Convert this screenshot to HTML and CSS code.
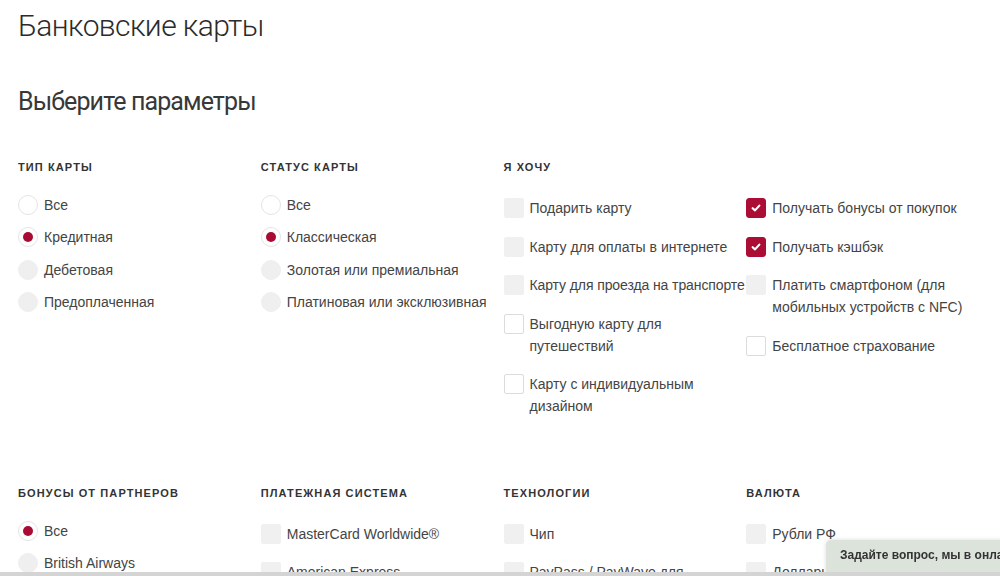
FILE: index.html
```html
<!DOCTYPE html>
<html lang="ru">
<head>
    <meta charset="UTF-8">
    <meta name="viewport" content="width=device-width, initial-scale=1.0">
    <title>Банковские карты</title>
    <link rel="stylesheet" href="styles.css">
</head>
<body>
    <div class="page">
        <h1>Банковские карты</h1>
        <h2>Выберите параметры</h2>

        <div class="section">
            <div class="group">
                <div class="group-title">Тип карты</div>
                <div class="radios">
                    <label class="opt"><span class="radio"></span><span class="text">Все</span></label>
                    <label class="opt"><span class="radio checked"></span><span class="text">Кредитная</span></label>
                    <label class="opt"><span class="radio off"></span><span class="text">Дебетовая</span></label>
                    <label class="opt"><span class="radio off"></span><span class="text">Предоплаченная</span></label>
                </div>
            </div>
            <div class="group">
                <div class="group-title">Статус карты</div>
                <div class="radios">
                    <label class="opt"><span class="radio"></span><span class="text">Все</span></label>
                    <label class="opt"><span class="radio checked"></span><span class="text">Классическая</span></label>
                    <label class="opt"><span class="radio off"></span><span class="text">Золотая или премиальная</span></label>
                    <label class="opt"><span class="radio off"></span><span class="text">Платиновая или эксклюзивная</span></label>
                </div>
            </div>
            <div class="group wide">
                <div class="group-title">Я хочу</div>
                <div class="checks-cols">
                    <div class="checks">
                        <label class="opt"><span class="box off"></span><span class="text">Подарить карту</span></label>
                        <label class="opt"><span class="box off"></span><span class="text">Карту для оплаты в интернете</span></label>
                        <label class="opt"><span class="box off"></span><span class="text nowrap">Карту для проезда на транспорте</span></label>
                        <label class="opt"><span class="box"></span><span class="text">Выгодную карту для путешествий</span></label>
                        <label class="opt"><span class="box"></span><span class="text">Карту с индивидуальным дизайном</span></label>
                    </div>
                    <div class="checks">
                        <label class="opt"><span class="box checked"><svg viewBox="0 0 10 10"><polyline points="2.2,5.2 4.2,7 7.8,3"/></svg></span><span class="text">Получать бонусы от покупок</span></label>
                        <label class="opt"><span class="box checked"><svg viewBox="0 0 10 10"><polyline points="2.2,5.2 4.2,7 7.8,3"/></svg></span><span class="text">Получать кэшбэк</span></label>
                        <label class="opt"><span class="box off"></span><span class="text">Платить смартфоном (для мобильных устройств с NFC)</span></label>
                        <label class="opt"><span class="box"></span><span class="text">Бесплатное страхование</span></label>
                    </div>
                </div>
            </div>
        </div>

        <div class="section">
            <div class="group">
                <div class="group-title">Бонусы от партнеров</div>
                <div class="radios">
                    <label class="opt"><span class="radio checked"></span><span class="text">Все</span></label>
                    <label class="opt"><span class="radio off"></span><span class="text">British Airways</span></label>
                    <label class="opt"><span class="radio off"></span><span class="text">Аэрофлот</span></label>
                </div>
            </div>
            <div class="group">
                <div class="group-title">Платежная система</div>
                <div class="checks">
                    <label class="opt"><span class="box off"></span><span class="text">MasterCard Worldwide®</span></label>
                    <label class="opt"><span class="box off"></span><span class="text">American Express</span></label>
                </div>
            </div>
            <div class="group">
                <div class="group-title">Технологии</div>
                <div class="checks">
                    <label class="opt"><span class="box off"></span><span class="text">Чип</span></label>
                    <label class="opt"><span class="box off"></span><span class="text">PayPass / PayWave для смартфонов</span></label>
                </div>
            </div>
            <div class="group">
                <div class="group-title">Валюта</div>
                <div class="checks">
                    <label class="opt"><span class="box off"></span><span class="text">Рубли РФ</span></label>
                    <label class="opt"><span class="box off"></span><span class="text">Доллары США</span></label>
                </div>
            </div>
        </div>
    </div>

    <div class="chat">Задайте вопрос, мы в онлайне!</div>
    <div class="bottom-bar"></div>
</body>
</html>
```

FILE: styles.css
```css
html, body {
    overflow: hidden;
}

body {
    margin: 0;
    font-family: "Liberation Sans", Arial, sans-serif;
    color: #444;
    background-color: #fff;
}

.page {
    padding: 0 11px 0 18px;
}

h1 {
    margin: 0;
    padding-top: 6px;
    font-family: Roboto, "Noto Sans", sans-serif;
    font-weight: 300;
    font-size: 30px;
    line-height: 39px;
    letter-spacing: -0.6px;
    color: #2b2b2b;
}

h2 {
    margin: 40px 0 0;
    font-family: Roboto, "Noto Sans", sans-serif;
    font-weight: 400;
    font-size: 25px;
    line-height: 33px;
    letter-spacing: -0.9px;
    color: #383838;
}

.section {
    display: grid;
    grid-template-columns: repeat(4, minmax(0, 1fr));
    margin-top: 42px;
}

.section + .section {
    margin-top: 52px;
}

.group.wide {
    grid-column: span 2;
}

.group-title {
    font-size: 11px;
    line-height: 14px;
    font-weight: bold;
    letter-spacing: 1.1px;
    text-transform: uppercase;
    color: #333;
    margin-bottom: 21px;
}

.checks-cols {
    display: grid;
    grid-template-columns: repeat(2, minmax(0, 1fr));
}

.opt {
    display: flex;
    align-items: flex-start;
    gap: 6px;
    font-size: 14px;
    cursor: pointer;
}

.radios .opt {
    line-height: 20px;
    margin-bottom: 12.4px;
}

.checks {
    padding-top: 2px;
}

.checks .opt {
    line-height: 22px;
    margin-bottom: 16.5px;
}

.text.nowrap {
    white-space: nowrap;
    letter-spacing: -0.1px;
}

/* радиокнопки */
.radio {
    flex: none;
    width: 20px;
    height: 20px;
    box-sizing: border-box;
    border-radius: 50%;
    border: 1px solid #e4e4e4;
    background-color: #fff;
    display: flex;
    align-items: center;
    justify-content: center;
}

.radio.off {
    background-color: #efefef;
    border-color: #efefef;
}

.radio.checked::after {
    content: "";
    width: 10px;
    height: 10px;
    border-radius: 50%;
    background-color: #a90b33;
}

/* чекбоксы */
.box {
    flex: none;
    width: 20px;
    height: 20px;
    margin-top: 1px;
    box-sizing: border-box;
    border-radius: 2px;
    border: 1px solid #dcdcdc;
    background-color: #fff;
    display: flex;
    align-items: center;
    justify-content: center;
}

.box.off {
    background-color: #f0f0f0;
    border-color: #f0f0f0;
}

.box.checked {
    background-color: #ab0d34;
    border-color: #ab0d34;
    border-radius: 3px;
}

.box svg {
    width: 12px;
    height: 12px;
    fill: none;
    stroke: #fff;
    stroke-width: 1.8;
    stroke-linecap: round;
    stroke-linejoin: round;
}

.chat {
    position: fixed;
    left: 826px;
    bottom: 0;
    width: 200px;
    height: 36px;
    padding: 8px 0 0 14px;
    box-sizing: border-box;
    white-space: nowrap;
    overflow: hidden;
    background-color: #dce3db;
    border-top-left-radius: 5px;
    box-shadow: 0 0 4px rgba(0, 0, 0, 0.15);
    font-size: 12px;
    font-weight: bold;
    color: #333;
}

.bottom-bar {
    position: fixed;
    left: 0;
    right: 0;
    bottom: 0;
    height: 4px;
    background-color: #d4d4d4;
}
```
